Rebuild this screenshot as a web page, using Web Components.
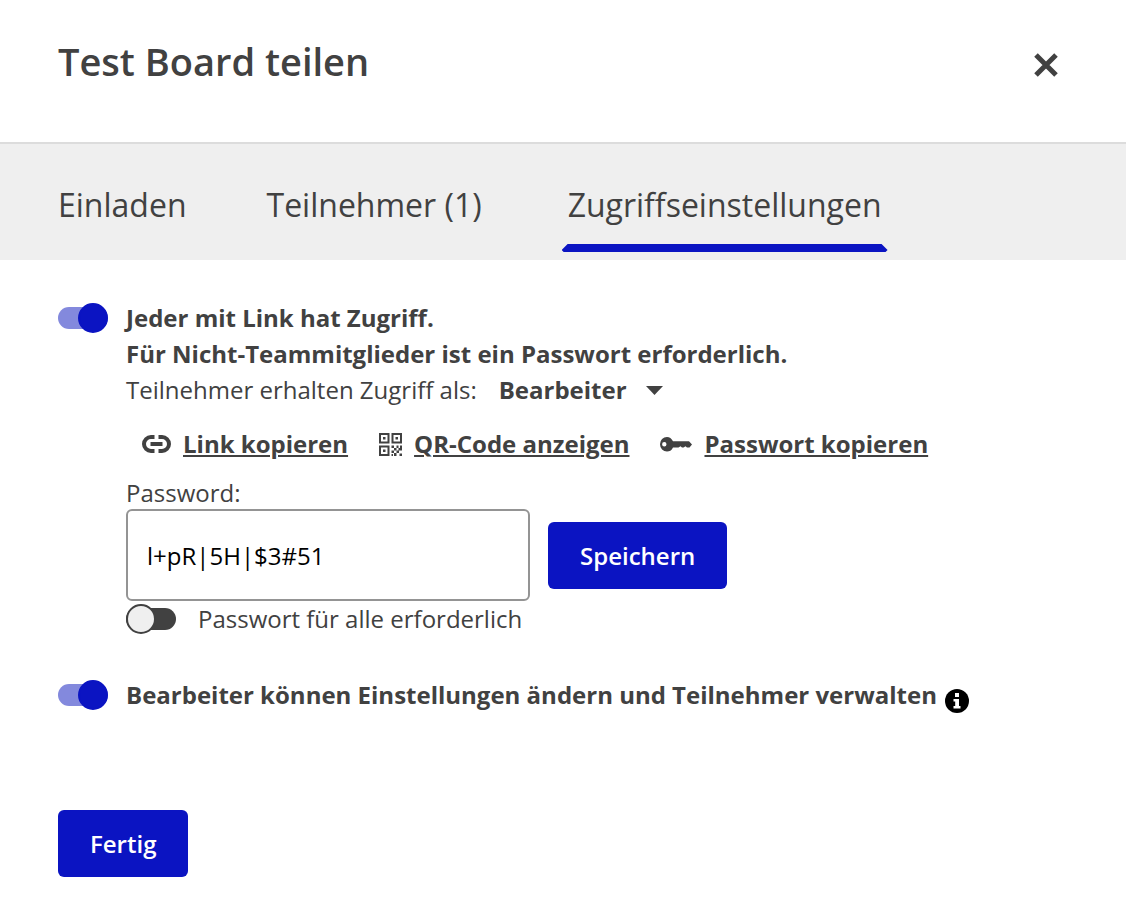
<!DOCTYPE html>
<html lang="de">
<head>
<meta charset="utf-8">
<meta name="viewport" content="width=device-width, initial-scale=1">
<title>Test Board teilen</title>
<style>
:root {
  --color-text: #414141;
  --color-primary: #0b14c2;
  --color-primary-light: #8389dd;
  --color-bar: #efefef;
  --gutter: 58px;
}

body {
  margin: 0;
  background: #fff;
  color: var(--color-text);
  font: 400 24px/36px "Open Sans", "Noto Sans", sans-serif;
}
</style>
</head>
<body>
<share-dialog>
  <span slot="title">Test Board teilen</span>
  <share-tab slot="tabs">Einladen</share-tab>
  <share-tab slot="tabs">Teilnehmer (1)</share-tab>
  <share-tab slot="tabs" active>Zugriffseinstellungen</share-tab>
  <access-settings></access-settings>
  <share-button slot="footer">Fertig</share-button>
</share-dialog>

<script>
const makeTemplate = (html) => {
  const template = document.createElement('template');
  template.innerHTML = html;
  return template;
};

class BaseElement extends HTMLElement {
  constructor() {
    super();
    this.attachShadow({ mode: 'open' });
    this.shadowRoot.appendChild(this.constructor.template.content.cloneNode(true));
  }
}

class ShareDialog extends BaseElement {
  static template = makeTemplate(`
<style>
:host {
  display: block;
}

header {
  display: flex;
  align-items: flex-start;
  justify-content: space-between;
  padding: 34px var(--gutter) 54px;
  border-bottom: 2px solid #dcdcdc;
}

h1 {
  margin: 0;
  font-size: 38px;
  font-weight: 600;
  line-height: 54px;
}

.close {
  display: flex;
  margin: 9px 0 0;
  padding: 10px;
  border: 0;
  background: none;
  color: inherit;
  cursor: pointer;
}

nav {
  display: flex;
  gap: 80px;
  padding: 36px var(--gutter) 8px;
  background: var(--color-bar);
}

main {
  padding: 40px var(--gutter) 0;
}

footer {
  padding: 97px var(--gutter) 31px;
}
</style>
<header>
  <h1><slot name="title"></slot></h1>
  <button class="close" type="button" aria-label="Schließen">
    <svg width="24" height="24" viewBox="0 0 24 24" aria-hidden="true">
      <path d="M2 2L22 22M22 2L2 22" fill="none" stroke="currentColor" stroke-width="5"/>
    </svg>
  </button>
</header>
<nav><slot name="tabs"></slot></nav>
<main><slot></slot></main>
<footer><slot name="footer"></slot></footer>
`);

  connectedCallback() {
    this.shadowRoot.querySelector('.close').addEventListener('click', () => {
      this.dispatchEvent(new CustomEvent('close'));
    });
    this.addEventListener('tab-select', (e) => {
      this.querySelectorAll('share-tab').forEach((tab) => {
        tab.toggleAttribute('active', tab === e.target);
      });
    });
  }
}

class ShareTab extends BaseElement {
  static template = makeTemplate(`
<style>
:host {
  display: block;
}

button {
  display: flex;
  flex-direction: column;
  gap: 14px;
  padding: 0;
  border: 0;
  background: none;
  color: inherit;
  font: inherit;
  font-size: 32px;
  line-height: 50px;
  white-space: nowrap;
  cursor: pointer;
}

.bar {
  align-self: stretch;
  height: 8px;
}

:host([active]) .label {
  padding: 0 6px;
}

:host([active]) .bar {
  background: var(--color-primary);
  clip-path: polygon(6px 0, calc(100% - 6px) 0, 100% 6px, calc(100% - 2px) 100%, 2px 100%, 0 6px);
}
</style>
<button type="button"><span class="label"><slot></slot></span><span class="bar"></span></button>
`);

  connectedCallback() {
    this.shadowRoot.querySelector('button').addEventListener('click', () => {
      this.dispatchEvent(new CustomEvent('tab-select', { bubbles: true }));
    });
  }
}

class ShareButton extends BaseElement {
  static template = makeTemplate(`
<style>
:host {
  display: inline-block;
  vertical-align: top;
}

button {
  display: block;
  padding: 16px 32px 15px;
  border: 0;
  border-radius: 6px;
  background: var(--color-primary);
  color: #fff;
  font: inherit;
  font-weight: 600;
  cursor: pointer;
}
</style>
<button type="button"><slot></slot></button>
`);
}

class ToggleSwitch extends BaseElement {
  static template = makeTemplate(`
<style>
:host {
  display: block;
}

label {
  display: flex;
  align-items: flex-start;
  gap: var(--toggle-gap, 18px);
  cursor: pointer;
}

/* the thumb is taller than the track and overflows it */
input {
  appearance: none;
  flex: none;
  display: flex;
  align-items: center;
  width: 50px;
  height: 22px;
  margin: 7px 0;
  border-radius: 11px;
  background: var(--color-text);
  cursor: pointer;
}

input::before {
  content: "";
  box-sizing: border-box;
  flex: none;
  width: 30px;
  height: 30px;
  border: 2px solid var(--color-text);
  border-radius: 50%;
  background: var(--color-bar);
}

input:checked {
  justify-content: flex-end;
  background: var(--color-primary-light);
}

input:checked::before {
  border-color: var(--color-primary);
  background: var(--color-primary);
}
</style>
<label><input type="checkbox" role="switch"><span><slot></slot></span></label>
`);

  connectedCallback() {
    this.shadowRoot.querySelector('input').checked = this.hasAttribute('checked');
  }
}

class ActionLink extends BaseElement {
  static template = makeTemplate(`
<style>
:host {
  display: flex;
  align-items: center;
  gap: 12px;
}

a {
  color: inherit;
  font-weight: 700;
  text-decoration: underline;
  text-decoration-thickness: 2px;
  text-underline-offset: 2px;
  white-space: nowrap;
}
</style>
<slot name="icon"></slot>
<a href="#"><slot></slot></a>
`);
}

class AccessSettings extends BaseElement {
  static template = makeTemplate(`
<style>
:host {
  display: block;
}

svg {
  display: block;
  flex: none;
}

b {
  font-weight: 700;
}

.details {
  padding-left: 68px;
}

.role {
  display: flex;
  flex-wrap: wrap;
  gap: 22px;
}

.select {
  display: grid;
  align-items: center;
}

.select > * {
  grid-area: 1 / 1;
}

.select svg {
  justify-self: end;
  pointer-events: none;
}

select {
  appearance: none;
  margin: 0;
  padding: 0 36px 0 0;
  border: 0;
  background: none;
  color: inherit;
  font: inherit;
  font-weight: 700;
}

.links {
  display: flex;
  flex-wrap: wrap;
  gap: 8px 31px;
  padding: 18px 16px 15px;
}

.password {
  display: block;
  line-height: 32px;
}

.row {
  display: flex;
  align-items: center;
  gap: 18px;
}

input {
  box-sizing: border-box;
  width: 404px;
  min-width: 0;
  height: 92px;
  margin: 0;
  padding: 0 19px;
  border: 2px solid #949494;
  border-radius: 6px;
  background: #fff;
  color: #000;
  font: inherit;
}

.all {
  --toggle-gap: 22px;
}

.manage {
  display: flex;
  gap: 8px;
  margin-top: 40px;
}

.info {
  display: block;
  align-self: flex-end;
  padding: 0;
  border: 0;
  background: none;
  cursor: pointer;
}
</style>
<toggle-switch checked><b>Jeder mit Link hat Zugriff.<br>Für Nicht-Teammitglieder ist ein Passwort erforderlich.</b></toggle-switch>
<div class="details">
  <div class="role">
    <label for="role">Teilnehmer erhalten Zugriff als:</label>
    <div class="select">
      <select id="role"><option>Bearbeiter</option></select>
      <svg width="17" height="9" viewBox="0 0 17 9" aria-hidden="true"><path d="M0 0H17L8.500 9Z" fill="currentColor"/></svg>
    </div>
  </div>
  <div class="links">
    <action-link>
      <svg slot="icon" width="29" height="18" viewBox="0 0 29 18" aria-hidden="true">
        <g fill="none" stroke="currentColor">
          <path d="M12.500 2H9A7 7 0 0 0 9 16H12.500M16.500 2H20A7 7 0 0 1 20 16H16.500" stroke-width="4"/>
          <path d="M8.500 9H20.500" stroke-width="4"/>
        </g>
      </svg>
      Link kopieren
    </action-link>
    <action-link>
      <svg slot="icon" width="23" height="23" viewBox="0 0 23 23" aria-hidden="true">
        <g fill="none" stroke="currentColor" stroke-width="2">
          <path d="M1 1H9.500V9.500H1ZM13.500 1H22V9.500H13.500ZM1 13.500H9.500V22H1Z"/>
        </g>
        <path d="M4 4H6.500V6.500H4ZM16.500 4H19V6.500H16.500ZM4 16.500H6.500V19H4ZM12.500 12.500H15V15H17.500V12.500H19.500V15H17.500V17.500H15V20H12.500V17.500H15V15H12.500ZM21 12.500H23V17.500H20V20H17.500V17.500H19.500V15H21ZM15 20H17.500V23H15ZM12.500 21H14V23H12.500ZM20.500 20.500H23V23H20.500Z" fill="currentColor"/>
      </svg>
      QR-Code anzeigen
    </action-link>
    <action-link>
      <svg slot="icon" width="32" height="15" viewBox="0 0 32 15" aria-hidden="true">
        <path d="M7 0C9.500 0 11.500 1.500 13 4.300H29L32 7.500L29.500 10.500H27L25.500 9.300L23.500 10.500H22L20.500 9.300L18.500 10.500H13C11.500 13.500 9.500 14.500 7 14.500A7 7.250 0 0 1 7 0ZM4.300 5A2.200 2.200 0 0 0 4.300 9.400A2.200 2.200 0 0 0 4.300 5Z" fill="currentColor" fill-rule="evenodd"/>
      </svg>
      Passwort kopieren
    </action-link>
  </div>
  <label class="password" for="password">Password:</label>
  <div class="row">
    <input id="password" type="text" value="l+pR|5H|$3#51">
    <share-button>Speichern</share-button>
  </div>
  <toggle-switch class="all">Passwort für alle erforderlich</toggle-switch>
</div>
<div class="manage">
  <toggle-switch checked><b>Bearbeiter können Einstellungen ändern und Teilnehmer verwalten</b></toggle-switch>
  <button class="info" type="button" aria-label="Info">
    <svg width="24" height="24" viewBox="0 0 24 24" aria-hidden="true">
      <circle cx="12" cy="12" r="12" fill="#000"/>
      <path d="M10 4H14V8H10ZM8.500 10H14V17H15.500V19.500H8.500V17H10.200V12.500H8.500Z" fill="#fff"/>
    </svg>
  </button>
</div>
`);
}

window.customElements.define('share-dialog', ShareDialog);
window.customElements.define('share-tab', ShareTab);
window.customElements.define('share-button', ShareButton);
window.customElements.define('toggle-switch', ToggleSwitch);
window.customElements.define('action-link', ActionLink);
window.customElements.define('access-settings', AccessSettings);
</script>
</body>
</html>
